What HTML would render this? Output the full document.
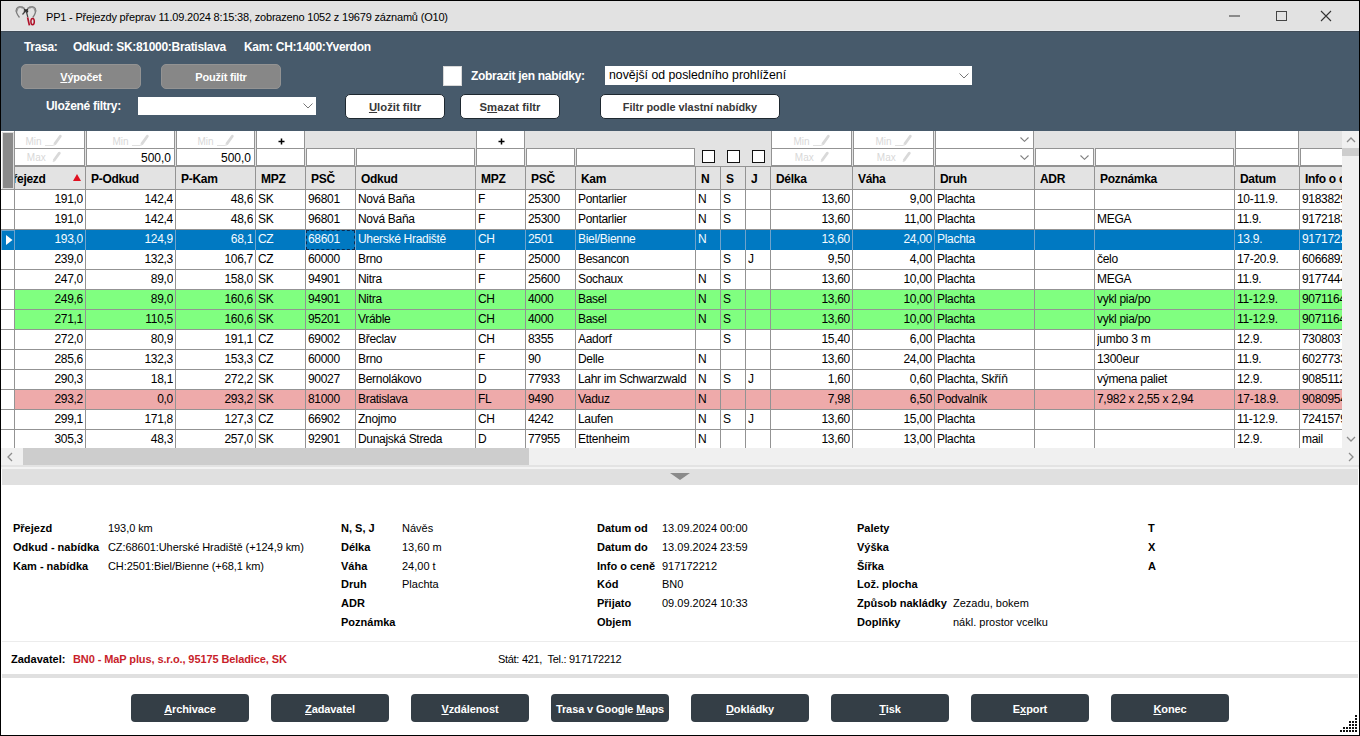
<!DOCTYPE html><html><head><meta charset="utf-8"><style>
html,body{margin:0;padding:0;background:#fff;}
#root{position:relative;width:1360px;height:736px;overflow:hidden;background:#fff;font-family:"Liberation Sans", sans-serif;}
#root div{position:absolute;box-sizing:border-box;}
.t{white-space:nowrap;line-height:1;}
.c{position:absolute;white-space:nowrap;overflow:hidden;font-size:12px;line-height:19px;color:#000;letter-spacing:-0.3px;}
.r{text-align:right;}
.btn{border-radius:4px;text-align:center;font-weight:bold;white-space:nowrap;}
u{text-decoration:underline;text-underline-offset:1px;}

</style></head><body><div id="root">
<div style="left:1px;top:1px;width:1358px;height:30px;background:#e2e2e2;"></div>
<div class="t" style="left:46px;top:12px;font-size:11px;color:#000;letter-spacing:-0.19px;">PP1 - Přejezdy přeprav 11.09.2024 8:15:38, zobrazeno 1052 z 19679 záznamů (O10)</div>
<svg style="position:absolute;left:10px;top:2px" width="30" height="28" viewBox="0 0 30 28">
<path d="M9.5 15.5 C7 12.5 5.8 9 6.6 6.8 C7.6 4.6 11 4.2 13.2 5.8 L16 8.6" fill="none" stroke="#7c7c7c" stroke-width="1.3"/>
<path d="M6.8 9.5 C6.5 7 8 5 10.5 5 C12 5 13 5.6 14 6.5" fill="none" stroke="#8a8a8a" stroke-width="2.2" stroke-dasharray="1.2 0.6"/>
<path d="M22.8 15.5 C25 12.5 26 9 25.4 6.8 C24.4 4.6 21 4.2 18.8 5.8 L16 8.6" fill="none" stroke="#7c7c7c" stroke-width="1.3"/>
<path d="M25.2 9.5 C25.5 7 24 5 21.5 5 C20 5 19 5.6 18 6.5" fill="none" stroke="#8a8a8a" stroke-width="2.2" stroke-dasharray="1.2 0.6"/>
<path d="M14 7.5 L18 10 M18 7.5 L14 10" stroke="#2a2a2a" stroke-width="1.5"/>
<path d="M15.5 9 L12.5 12.5 M16.2 9 L17.8 15" fill="none" stroke="#444" stroke-width="1.2"/>
<path d="M17.6 15.4 L19.4 23.4" stroke="#b01028" stroke-width="1.7"/>
<ellipse cx="22.6" cy="19.6" rx="1.7" ry="3.2" fill="none" stroke="#b01028" stroke-width="1.5"/>
</svg>
<div style="left:1229px;top:15px;width:11px;height:2px;background:#8a8a8a;"></div>
<div style="left:1276px;top:11px;width:11px;height:10px;border:1px solid #444;"></div>
<svg style="position:absolute;left:1320px;top:10px" width="12" height="12" viewBox="0 0 12 12"><path d="M1 1 L11 11 M11 1 L1 11" stroke="#333" stroke-width="1.1"/></svg>
<div style="left:1px;top:31px;width:1358px;height:100px;background:#475a6b;"></div>
<div style="left:1px;top:30px;width:1358px;height:1px;background:#e6e9ec;"></div>
<div style="left:1px;top:31px;width:1358px;height:1px;background:#414d59;"></div>
<div class="t" style="left:24px;top:41px;font-size:12px;font-weight:bold;color:#fff;letter-spacing:-0.3px;">Trasa:</div>
<div class="t" style="left:73px;top:41px;font-size:12px;font-weight:bold;color:#fff;letter-spacing:-0.3px;">Odkud: SK:81000:Bratislava</div>
<div class="t" style="left:244px;top:41px;font-size:12px;font-weight:bold;color:#fff;letter-spacing:-0.3px;">Kam: CH:1400:Yverdon</div>
<div style="left:21px;top:64px;width:120px;height:25px;background:#878787;border:1px solid #939393;border-radius:5px;"><div class="t" style="position:static;text-align:center;line-height:24px;font-size:11px;letter-spacing:-0.2px;font-weight:bold;color:#fff;"><u>V</u>ýpočet</div></div>
<div style="left:161px;top:64px;width:120px;height:25px;background:#878787;border:1px solid #939393;border-radius:5px;"><div class="t" style="position:static;text-align:center;line-height:24px;font-size:11px;letter-spacing:-0.2px;font-weight:bold;color:#fff;">Použít filtr</div></div>
<div style="left:443px;top:66px;width:19px;height:20px;background:#fff;border:1px solid #d8d8d8;"></div>
<div class="t" style="left:471px;top:70px;font-size:12px;font-weight:bold;color:#fff;letter-spacing:-0.3px;">Zobrazit jen nabídky:</div>
<div style="left:605px;top:66px;width:367px;height:19px;background:#fff;"><div class="t" style="left:4px;top:3px;font-size:12.3px;color:#000;">novější od posledního prohlížení</div></div>
<svg style="position:absolute;left:959px;top:73px" width="10" height="6" viewBox="0 0 10 6"><path d="M0.5 0.5 L5 5 L9.5 0.5" fill="none" stroke="#777" stroke-width="1"/></svg>
<div class="t" style="left:46px;top:100px;font-size:12px;font-weight:bold;color:#fff;letter-spacing:-0.3px;">Uložené filtry:</div>
<div style="left:138px;top:97px;width:178px;height:18px;background:#fff;"></div>
<svg style="position:absolute;left:303px;top:103px" width="10" height="6" viewBox="0 0 10 6"><path d="M0.5 0.5 L5 5 L9.5 0.5" fill="none" stroke="#777" stroke-width="1"/></svg>
<div style="left:345px;top:94px;width:100px;height:25px;background:#fff;border:1px solid #1e2830;border-radius:5px;"><div class="t" style="position:static;text-align:center;line-height:24px;font-size:11.3px;font-weight:bold;color:#383838;"><u>U</u>ložit filtr</div></div>
<div style="left:460px;top:94px;width:100px;height:25px;background:#fff;border:1px solid #1e2830;border-radius:5px;"><div class="t" style="position:static;text-align:center;line-height:24px;font-size:11.3px;font-weight:bold;color:#383838;">S<u>m</u>azat filtr</div></div>
<div style="left:600px;top:94px;width:180px;height:25px;background:#fff;border:1px solid #1e2830;border-radius:5px;"><div class="t" style="position:static;text-align:center;line-height:24px;font-size:10.9px;font-weight:bold;color:#383838;">Filtr podle vlastní nabídky</div></div>
<div style="left:1px;top:131px;width:1341px;height:36px;background:#e3e3e3;"></div>
<div style="left:14px;top:131px;width:71px;height:18px;background:#fff;border-right:1px solid #939393;border-left:1px solid #939393;border-bottom:1px solid #939393;"></div>
<svg style="position:absolute;left:23.5px;top:131px" width="40" height="17" viewBox="0 0 40 17"><text x="1.5" y="13.6" font-family="Liberation Sans" font-size="10" fill="#d8d8d8">Min</text><path d="M21 14.5 L29.5 14.5" stroke="#e0e0e0" stroke-width="1"/><path d="M36.3 5.2 L31 12.6" stroke="#d9d9d9" stroke-width="2.8" stroke-linecap="round"/><path d="M30.6 13.2 L29.6 14.6" stroke="#e2e2e2" stroke-width="1.4"/></svg>
<div style="left:14px;top:148px;width:71px;height:18px;background:#fff;border:1px solid #939393;"></div>
<svg style="position:absolute;left:23.5px;top:148px" width="40" height="17" viewBox="0 0 40 17"><text x="2.8" y="12.8" font-family="Liberation Sans" font-size="10" fill="#d8d8d8">Max</text><path d="M35.3 5.2 L30.3 12" stroke="#d9d9d9" stroke-width="2.8" stroke-linecap="round"/><path d="M29.9 12.6 L29 13.8" stroke="#e2e2e2" stroke-width="1.4"/></svg>
<div style="left:86px;top:131px;width:89px;height:18px;background:#fff;border-right:1px solid #939393;border-left:1px solid #939393;border-bottom:1px solid #939393;"></div>
<svg style="position:absolute;left:111.0px;top:131px" width="40" height="17" viewBox="0 0 40 17"><text x="1.5" y="13.6" font-family="Liberation Sans" font-size="10" fill="#d8d8d8">Min</text><path d="M21 14.5 L29.5 14.5" stroke="#e0e0e0" stroke-width="1"/><path d="M36.3 5.2 L31 12.6" stroke="#d9d9d9" stroke-width="2.8" stroke-linecap="round"/><path d="M30.6 13.2 L29.6 14.6" stroke="#e2e2e2" stroke-width="1.4"/></svg>
<div style="left:86px;top:148px;width:89px;height:18px;background:#fff;border:1px solid #939393;"><div class="t" style="right:3px;top:3px;font-size:12px;color:#000;">500,0</div></div>
<div style="left:176px;top:131px;width:79px;height:18px;background:#fff;border-right:1px solid #939393;border-left:1px solid #939393;border-bottom:1px solid #939393;"></div>
<svg style="position:absolute;left:196.0px;top:131px" width="40" height="17" viewBox="0 0 40 17"><text x="1.5" y="13.6" font-family="Liberation Sans" font-size="10" fill="#d8d8d8">Min</text><path d="M21 14.5 L29.5 14.5" stroke="#e0e0e0" stroke-width="1"/><path d="M36.3 5.2 L31 12.6" stroke="#d9d9d9" stroke-width="2.8" stroke-linecap="round"/><path d="M30.6 13.2 L29.6 14.6" stroke="#e2e2e2" stroke-width="1.4"/></svg>
<div style="left:176px;top:148px;width:79px;height:18px;background:#fff;border:1px solid #939393;"><div class="t" style="right:3px;top:3px;font-size:12px;color:#000;">500,0</div></div>
<div style="left:256px;top:131px;width:49px;height:18px;background:#fff;border-right:1px solid #939393;border-left:1px solid #939393;border-bottom:1px solid #939393;"><svg style="position:absolute;left:21.0px;top:7px" width="7" height="7" viewBox="0 0 7 7"><path d="M3.5 0.5 L3.5 6.5 M0.5 3.5 L6.5 3.5" stroke="#000" stroke-width="1.5"/></svg></div>
<div style="left:256px;top:148px;width:49px;height:18px;background:#fff;border:1px solid #939393;"></div>
<div style="left:306px;top:148px;width:49px;height:18px;background:#fff;border:1px solid #939393;"></div>
<div style="left:356px;top:148px;width:119px;height:18px;background:#fff;border:1px solid #939393;"></div>
<div style="left:476px;top:131px;width:49px;height:18px;background:#fff;border-right:1px solid #939393;border-left:1px solid #939393;border-bottom:1px solid #939393;"><svg style="position:absolute;left:21.0px;top:7px" width="7" height="7" viewBox="0 0 7 7"><path d="M3.5 0.5 L3.5 6.5 M0.5 3.5 L6.5 3.5" stroke="#000" stroke-width="1.5"/></svg></div>
<div style="left:476px;top:148px;width:49px;height:18px;background:#fff;border:1px solid #939393;"></div>
<div style="left:526px;top:148px;width:49px;height:18px;background:#fff;border:1px solid #939393;"></div>
<div style="left:576px;top:148px;width:119px;height:18px;background:#fff;border:1px solid #939393;"></div>
<div style="left:702px;top:150px;width:13px;height:13px;background:#fff;border:1px solid #111;"></div>
<div style="left:727px;top:150px;width:13px;height:13px;background:#fff;border:1px solid #111;"></div>
<div style="left:752px;top:150px;width:13px;height:13px;background:#fff;border:1px solid #111;"></div>
<div style="left:771px;top:131px;width:81px;height:18px;background:#fff;border-right:1px solid #939393;border-left:1px solid #939393;border-bottom:1px solid #939393;"></div>
<svg style="position:absolute;left:792.0px;top:131px" width="40" height="17" viewBox="0 0 40 17"><text x="1.5" y="13.6" font-family="Liberation Sans" font-size="10" fill="#d8d8d8">Min</text><path d="M21 14.5 L29.5 14.5" stroke="#e0e0e0" stroke-width="1"/><path d="M36.3 5.2 L31 12.6" stroke="#d9d9d9" stroke-width="2.8" stroke-linecap="round"/><path d="M30.6 13.2 L29.6 14.6" stroke="#e2e2e2" stroke-width="1.4"/></svg>
<div style="left:771px;top:148px;width:81px;height:18px;background:#fff;border:1px solid #939393;"></div>
<svg style="position:absolute;left:792.0px;top:148px" width="40" height="17" viewBox="0 0 40 17"><text x="2.8" y="12.8" font-family="Liberation Sans" font-size="10" fill="#d8d8d8">Max</text><path d="M35.3 5.2 L30.3 12" stroke="#d9d9d9" stroke-width="2.8" stroke-linecap="round"/><path d="M29.9 12.6 L29 13.8" stroke="#e2e2e2" stroke-width="1.4"/></svg>
<div style="left:853px;top:131px;width:81px;height:18px;background:#fff;border-right:1px solid #939393;border-left:1px solid #939393;border-bottom:1px solid #939393;"></div>
<svg style="position:absolute;left:874.0px;top:131px" width="40" height="17" viewBox="0 0 40 17"><text x="1.5" y="13.6" font-family="Liberation Sans" font-size="10" fill="#d8d8d8">Min</text><path d="M21 14.5 L29.5 14.5" stroke="#e0e0e0" stroke-width="1"/><path d="M36.3 5.2 L31 12.6" stroke="#d9d9d9" stroke-width="2.8" stroke-linecap="round"/><path d="M30.6 13.2 L29.6 14.6" stroke="#e2e2e2" stroke-width="1.4"/></svg>
<div style="left:853px;top:148px;width:81px;height:18px;background:#fff;border:1px solid #939393;"></div>
<svg style="position:absolute;left:874.0px;top:148px" width="40" height="17" viewBox="0 0 40 17"><text x="2.8" y="12.8" font-family="Liberation Sans" font-size="10" fill="#d8d8d8">Max</text><path d="M35.3 5.2 L30.3 12" stroke="#d9d9d9" stroke-width="2.8" stroke-linecap="round"/><path d="M29.9 12.6 L29 13.8" stroke="#e2e2e2" stroke-width="1.4"/></svg>
<div style="left:935px;top:131px;width:99px;height:18px;background:#fff;border-right:1px solid #939393;border-left:1px solid #939393;border-bottom:1px solid #939393;"><svg style="position:absolute;right:4px;top:6px" width="9" height="5" viewBox="0 0 9 5"><path d="M0.5 0.5 L4.5 4.3 L8.5 0.5" fill="none" stroke="#808080" stroke-width="1.1"/></svg></div>
<div style="left:935px;top:148px;width:99px;height:18px;background:#fff;border:1px solid #939393;"><svg style="position:absolute;right:4px;top:6px" width="9" height="5" viewBox="0 0 9 5"><path d="M0.5 0.5 L4.5 4.3 L8.5 0.5" fill="none" stroke="#808080" stroke-width="1.1"/></svg></div>
<div style="left:1035px;top:148px;width:59px;height:18px;background:#fff;border:1px solid #939393;"><svg style="position:absolute;right:4px;top:6px" width="9" height="5" viewBox="0 0 9 5"><path d="M0.5 0.5 L4.5 4.3 L8.5 0.5" fill="none" stroke="#808080" stroke-width="1.1"/></svg></div>
<div style="left:1095px;top:148px;width:139px;height:18px;background:#fff;border:1px solid #939393;"></div>
<div style="left:1235px;top:131px;width:64px;height:18px;background:#fff;border-right:1px solid #939393;border-left:1px solid #939393;border-bottom:1px solid #939393;"></div>
<div style="left:1235px;top:148px;width:64px;height:18px;background:#fff;border:1px solid #939393;"></div>
<div style="left:1300px;top:148px;width:101px;height:18px;background:#fff;border:1px solid #939393;"></div>
<div style="left:1px;top:166px;width:1341px;height:24px;background:#e3e3e3;border-top:1px solid #939393;border-bottom:1px solid #939393;"></div>
<div style="left:14px;top:166px;width:1px;height:24px;background:#939393;"></div>
<div class="c" style="left:15px;top:168px;width:70px;height:21px;line-height:22px;font-weight:bold;"><span style="position:absolute;left:-10px;top:0">Přejezd</span></div>
<div style="left:85px;top:166px;width:1px;height:24px;background:#939393;"></div>
<div class="c" style="left:91px;top:168px;width:84px;height:21px;line-height:22px;font-weight:bold;">P-Odkud</div>
<div style="left:175px;top:166px;width:1px;height:24px;background:#939393;"></div>
<div class="c" style="left:181px;top:168px;width:74px;height:21px;line-height:22px;font-weight:bold;">P-Kam</div>
<div style="left:255px;top:166px;width:1px;height:24px;background:#939393;"></div>
<div class="c" style="left:261px;top:168px;width:44px;height:21px;line-height:22px;font-weight:bold;">MPZ</div>
<div style="left:305px;top:166px;width:1px;height:24px;background:#939393;"></div>
<div class="c" style="left:311px;top:168px;width:44px;height:21px;line-height:22px;font-weight:bold;">PSČ</div>
<div style="left:355px;top:166px;width:1px;height:24px;background:#939393;"></div>
<div class="c" style="left:361px;top:168px;width:114px;height:21px;line-height:22px;font-weight:bold;">Odkud</div>
<div style="left:475px;top:166px;width:1px;height:24px;background:#939393;"></div>
<div class="c" style="left:481px;top:168px;width:44px;height:21px;line-height:22px;font-weight:bold;">MPZ</div>
<div style="left:525px;top:166px;width:1px;height:24px;background:#939393;"></div>
<div class="c" style="left:531px;top:168px;width:44px;height:21px;line-height:22px;font-weight:bold;">PSČ</div>
<div style="left:575px;top:166px;width:1px;height:24px;background:#939393;"></div>
<div class="c" style="left:581px;top:168px;width:114px;height:21px;line-height:22px;font-weight:bold;">Kam</div>
<div style="left:695px;top:166px;width:1px;height:24px;background:#939393;"></div>
<div class="c" style="left:701px;top:168px;width:19px;height:21px;line-height:22px;font-weight:bold;">N</div>
<div style="left:720px;top:166px;width:1px;height:24px;background:#939393;"></div>
<div class="c" style="left:726px;top:168px;width:19px;height:21px;line-height:22px;font-weight:bold;">S</div>
<div style="left:745px;top:166px;width:1px;height:24px;background:#939393;"></div>
<div class="c" style="left:751px;top:168px;width:19px;height:21px;line-height:22px;font-weight:bold;">J</div>
<div style="left:770px;top:166px;width:1px;height:24px;background:#939393;"></div>
<div class="c" style="left:776px;top:168px;width:76px;height:21px;line-height:22px;font-weight:bold;">Délka</div>
<div style="left:852px;top:166px;width:1px;height:24px;background:#939393;"></div>
<div class="c" style="left:858px;top:168px;width:76px;height:21px;line-height:22px;font-weight:bold;">Váha</div>
<div style="left:934px;top:166px;width:1px;height:24px;background:#939393;"></div>
<div class="c" style="left:940px;top:168px;width:94px;height:21px;line-height:22px;font-weight:bold;">Druh</div>
<div style="left:1034px;top:166px;width:1px;height:24px;background:#939393;"></div>
<div class="c" style="left:1040px;top:168px;width:54px;height:21px;line-height:22px;font-weight:bold;">ADR</div>
<div style="left:1094px;top:166px;width:1px;height:24px;background:#939393;"></div>
<div class="c" style="left:1100px;top:168px;width:134px;height:21px;line-height:22px;font-weight:bold;">Poznámka</div>
<div style="left:1234px;top:166px;width:1px;height:24px;background:#939393;"></div>
<div class="c" style="left:1240px;top:168px;width:59px;height:21px;line-height:22px;font-weight:bold;">Datum</div>
<div style="left:1299px;top:166px;width:1px;height:24px;background:#939393;"></div>
<div class="c" style="left:1305px;top:168px;width:37px;height:21px;line-height:22px;font-weight:bold;">Info o ceně</div>
<svg style="position:absolute;left:73px;top:174px" width="8" height="7" viewBox="0 0 8 7"><path d="M4 0 L8 7 L0 7 Z" fill="#e01020"/></svg>
<div style="left:1px;top:131px;width:13px;height:58px;background:#fff;"></div>
<div style="left:2px;top:132px;width:12px;height:57px;border:1px solid #dcdcdc;"></div>
<div style="left:3px;top:133px;width:10px;height:55px;background:#8a8a8a;"></div>
<div style="left:14px;top:131px;width:1px;height:59px;background:#939393;"></div>
<div style="left:1px;top:189px;width:14px;height:1px;background:#939393;"></div>
<div style="left:1px;top:190px;width:1341px;height:258px;overflow:hidden;">
<div style="left:13px;top:0px;width:1341px;height:20px;background:#fff;border-bottom:1px solid #939393;"></div>
<div style="left:0px;top:0px;width:13px;height:20px;background:#fff;border-bottom:1px solid #939393;"></div>
<div style="left:13px;top:0px;width:1px;height:20px;background:#939393;"></div>
<div class="c r" style="left:14px;top:0px;width:68px;color:#000;">191,0</div>
<div style="left:84px;top:0px;width:1px;height:20px;background:#939393;"></div>
<div class="c r" style="left:85px;top:0px;width:87px;color:#000;">142,4</div>
<div style="left:174px;top:0px;width:1px;height:20px;background:#939393;"></div>
<div class="c r" style="left:175px;top:0px;width:77px;color:#000;">48,6</div>
<div style="left:254px;top:0px;width:1px;height:20px;background:#939393;"></div>
<div class="c" style="left:257px;top:0px;width:47px;color:#000;">SK</div>
<div style="left:304px;top:0px;width:1px;height:20px;background:#939393;"></div>
<div class="c" style="left:307px;top:0px;width:47px;color:#000;">96801</div>
<div style="left:354px;top:0px;width:1px;height:20px;background:#939393;"></div>
<div class="c" style="left:357px;top:0px;width:117px;color:#000;">Nová Baňa</div>
<div style="left:474px;top:0px;width:1px;height:20px;background:#939393;"></div>
<div class="c" style="left:477px;top:0px;width:47px;color:#000;">F</div>
<div style="left:524px;top:0px;width:1px;height:20px;background:#939393;"></div>
<div class="c" style="left:527px;top:0px;width:47px;color:#000;">25300</div>
<div style="left:574px;top:0px;width:1px;height:20px;background:#939393;"></div>
<div class="c" style="left:577px;top:0px;width:117px;color:#000;">Pontarlier</div>
<div style="left:694px;top:0px;width:1px;height:20px;background:#939393;"></div>
<div class="c" style="left:697px;top:0px;width:22px;color:#000;">N</div>
<div style="left:719px;top:0px;width:1px;height:20px;background:#939393;"></div>
<div class="c" style="left:722px;top:0px;width:22px;color:#000;">S</div>
<div style="left:744px;top:0px;width:1px;height:20px;background:#939393;"></div>
<div style="left:769px;top:0px;width:1px;height:20px;background:#939393;"></div>
<div class="c r" style="left:770px;top:0px;width:79px;color:#000;">13,60</div>
<div style="left:851px;top:0px;width:1px;height:20px;background:#939393;"></div>
<div class="c r" style="left:852px;top:0px;width:79px;color:#000;">9,00</div>
<div style="left:933px;top:0px;width:1px;height:20px;background:#939393;"></div>
<div class="c" style="left:936px;top:0px;width:97px;color:#000;">Plachta</div>
<div style="left:1033px;top:0px;width:1px;height:20px;background:#939393;"></div>
<div style="left:1093px;top:0px;width:1px;height:20px;background:#939393;"></div>
<div style="left:1233px;top:0px;width:1px;height:20px;background:#939393;"></div>
<div class="c" style="left:1236px;top:0px;width:62px;color:#000;">10-11.9.</div>
<div style="left:1298px;top:0px;width:1px;height:20px;background:#939393;"></div>
<div class="c" style="left:1301px;top:0px;width:58px;color:#000;">9183829</div>
<div style="left:13px;top:20px;width:1341px;height:20px;background:#fff;border-bottom:1px solid #939393;"></div>
<div style="left:0px;top:20px;width:13px;height:20px;background:#fff;border-bottom:1px solid #939393;"></div>
<div style="left:13px;top:20px;width:1px;height:20px;background:#939393;"></div>
<div class="c r" style="left:14px;top:20px;width:68px;color:#000;">191,0</div>
<div style="left:84px;top:20px;width:1px;height:20px;background:#939393;"></div>
<div class="c r" style="left:85px;top:20px;width:87px;color:#000;">142,4</div>
<div style="left:174px;top:20px;width:1px;height:20px;background:#939393;"></div>
<div class="c r" style="left:175px;top:20px;width:77px;color:#000;">48,6</div>
<div style="left:254px;top:20px;width:1px;height:20px;background:#939393;"></div>
<div class="c" style="left:257px;top:20px;width:47px;color:#000;">SK</div>
<div style="left:304px;top:20px;width:1px;height:20px;background:#939393;"></div>
<div class="c" style="left:307px;top:20px;width:47px;color:#000;">96801</div>
<div style="left:354px;top:20px;width:1px;height:20px;background:#939393;"></div>
<div class="c" style="left:357px;top:20px;width:117px;color:#000;">Nová Baňa</div>
<div style="left:474px;top:20px;width:1px;height:20px;background:#939393;"></div>
<div class="c" style="left:477px;top:20px;width:47px;color:#000;">F</div>
<div style="left:524px;top:20px;width:1px;height:20px;background:#939393;"></div>
<div class="c" style="left:527px;top:20px;width:47px;color:#000;">25300</div>
<div style="left:574px;top:20px;width:1px;height:20px;background:#939393;"></div>
<div class="c" style="left:577px;top:20px;width:117px;color:#000;">Pontarlier</div>
<div style="left:694px;top:20px;width:1px;height:20px;background:#939393;"></div>
<div class="c" style="left:697px;top:20px;width:22px;color:#000;">N</div>
<div style="left:719px;top:20px;width:1px;height:20px;background:#939393;"></div>
<div class="c" style="left:722px;top:20px;width:22px;color:#000;">S</div>
<div style="left:744px;top:20px;width:1px;height:20px;background:#939393;"></div>
<div style="left:769px;top:20px;width:1px;height:20px;background:#939393;"></div>
<div class="c r" style="left:770px;top:20px;width:79px;color:#000;">13,60</div>
<div style="left:851px;top:20px;width:1px;height:20px;background:#939393;"></div>
<div class="c r" style="left:852px;top:20px;width:79px;color:#000;">11,00</div>
<div style="left:933px;top:20px;width:1px;height:20px;background:#939393;"></div>
<div class="c" style="left:936px;top:20px;width:97px;color:#000;">Plachta</div>
<div style="left:1033px;top:20px;width:1px;height:20px;background:#939393;"></div>
<div style="left:1093px;top:20px;width:1px;height:20px;background:#939393;"></div>
<div class="c" style="left:1096px;top:20px;width:137px;color:#000;">MEGA</div>
<div style="left:1233px;top:20px;width:1px;height:20px;background:#939393;"></div>
<div class="c" style="left:1236px;top:20px;width:62px;color:#000;">11.9.</div>
<div style="left:1298px;top:20px;width:1px;height:20px;background:#939393;"></div>
<div class="c" style="left:1301px;top:20px;width:58px;color:#000;">9172183</div>
<div style="left:13px;top:40px;width:1341px;height:20px;background:#0079c2;border-bottom:1px solid #0079c2;"></div>
<div style="left:0px;top:40px;width:13px;height:20px;background:#0079c2;border-top:1px solid #6fa3cc;border-left:1px solid #6fa3cc;"></div>
<div style="left:13px;top:40px;width:1px;height:20px;background:#6fa3cc;"></div>
<div class="c r" style="left:14px;top:40px;width:68px;color:#f4fbff;">193,0</div>
<div style="left:84px;top:40px;width:1px;height:20px;background:#6fa3cc;"></div>
<div class="c r" style="left:85px;top:40px;width:87px;color:#f4fbff;">124,9</div>
<div style="left:174px;top:40px;width:1px;height:20px;background:#6fa3cc;"></div>
<div class="c r" style="left:175px;top:40px;width:77px;color:#f4fbff;">68,1</div>
<div style="left:254px;top:40px;width:1px;height:20px;background:#6fa3cc;"></div>
<div class="c" style="left:257px;top:40px;width:47px;color:#f4fbff;">CZ</div>
<div style="left:304px;top:40px;width:1px;height:20px;background:#6fa3cc;"></div>
<div class="c" style="left:307px;top:40px;width:47px;color:#f4fbff;">68601</div>
<div style="left:354px;top:40px;width:1px;height:20px;background:#6fa3cc;"></div>
<div class="c" style="left:357px;top:40px;width:117px;color:#f4fbff;">Uherské Hradiště</div>
<div style="left:474px;top:40px;width:1px;height:20px;background:#6fa3cc;"></div>
<div class="c" style="left:477px;top:40px;width:47px;color:#f4fbff;">CH</div>
<div style="left:524px;top:40px;width:1px;height:20px;background:#6fa3cc;"></div>
<div class="c" style="left:527px;top:40px;width:47px;color:#f4fbff;">2501</div>
<div style="left:574px;top:40px;width:1px;height:20px;background:#6fa3cc;"></div>
<div class="c" style="left:577px;top:40px;width:117px;color:#f4fbff;">Biel/Bienne</div>
<div style="left:694px;top:40px;width:1px;height:20px;background:#6fa3cc;"></div>
<div class="c" style="left:697px;top:40px;width:22px;color:#f4fbff;">N</div>
<div style="left:719px;top:40px;width:1px;height:20px;background:#6fa3cc;"></div>
<div style="left:744px;top:40px;width:1px;height:20px;background:#6fa3cc;"></div>
<div style="left:769px;top:40px;width:1px;height:20px;background:#6fa3cc;"></div>
<div class="c r" style="left:770px;top:40px;width:79px;color:#f4fbff;">13,60</div>
<div style="left:851px;top:40px;width:1px;height:20px;background:#6fa3cc;"></div>
<div class="c r" style="left:852px;top:40px;width:79px;color:#f4fbff;">24,00</div>
<div style="left:933px;top:40px;width:1px;height:20px;background:#6fa3cc;"></div>
<div class="c" style="left:936px;top:40px;width:97px;color:#f4fbff;">Plachta</div>
<div style="left:1033px;top:40px;width:1px;height:20px;background:#6fa3cc;"></div>
<div style="left:1093px;top:40px;width:1px;height:20px;background:#6fa3cc;"></div>
<div style="left:1233px;top:40px;width:1px;height:20px;background:#6fa3cc;"></div>
<div class="c" style="left:1236px;top:40px;width:62px;color:#f4fbff;">13.9.</div>
<div style="left:1298px;top:40px;width:1px;height:20px;background:#6fa3cc;"></div>
<div class="c" style="left:1301px;top:40px;width:58px;color:#f4fbff;">9171722</div>
<svg style="position:absolute;left:5px;top:45px" width="7" height="10" viewBox="0 0 7 10"><path d="M0 0 L6.5 5 L0 10 Z" fill="#fff"/></svg>
<div style="left:305px;top:40px;width:49px;height:20px;border:1px dashed #0a2a50;"></div>
<div style="left:13px;top:60px;width:1341px;height:20px;background:#fff;border-bottom:1px solid #939393;"></div>
<div style="left:0px;top:60px;width:13px;height:20px;background:#fff;border-bottom:1px solid #939393;"></div>
<div style="left:13px;top:60px;width:1px;height:20px;background:#939393;"></div>
<div class="c r" style="left:14px;top:60px;width:68px;color:#000;">239,0</div>
<div style="left:84px;top:60px;width:1px;height:20px;background:#939393;"></div>
<div class="c r" style="left:85px;top:60px;width:87px;color:#000;">132,3</div>
<div style="left:174px;top:60px;width:1px;height:20px;background:#939393;"></div>
<div class="c r" style="left:175px;top:60px;width:77px;color:#000;">106,7</div>
<div style="left:254px;top:60px;width:1px;height:20px;background:#939393;"></div>
<div class="c" style="left:257px;top:60px;width:47px;color:#000;">CZ</div>
<div style="left:304px;top:60px;width:1px;height:20px;background:#939393;"></div>
<div class="c" style="left:307px;top:60px;width:47px;color:#000;">60000</div>
<div style="left:354px;top:60px;width:1px;height:20px;background:#939393;"></div>
<div class="c" style="left:357px;top:60px;width:117px;color:#000;">Brno</div>
<div style="left:474px;top:60px;width:1px;height:20px;background:#939393;"></div>
<div class="c" style="left:477px;top:60px;width:47px;color:#000;">F</div>
<div style="left:524px;top:60px;width:1px;height:20px;background:#939393;"></div>
<div class="c" style="left:527px;top:60px;width:47px;color:#000;">25000</div>
<div style="left:574px;top:60px;width:1px;height:20px;background:#939393;"></div>
<div class="c" style="left:577px;top:60px;width:117px;color:#000;">Besancon</div>
<div style="left:694px;top:60px;width:1px;height:20px;background:#939393;"></div>
<div style="left:719px;top:60px;width:1px;height:20px;background:#939393;"></div>
<div class="c" style="left:722px;top:60px;width:22px;color:#000;">S</div>
<div style="left:744px;top:60px;width:1px;height:20px;background:#939393;"></div>
<div class="c" style="left:747px;top:60px;width:22px;color:#000;">J</div>
<div style="left:769px;top:60px;width:1px;height:20px;background:#939393;"></div>
<div class="c r" style="left:770px;top:60px;width:79px;color:#000;">9,50</div>
<div style="left:851px;top:60px;width:1px;height:20px;background:#939393;"></div>
<div class="c r" style="left:852px;top:60px;width:79px;color:#000;">4,00</div>
<div style="left:933px;top:60px;width:1px;height:20px;background:#939393;"></div>
<div class="c" style="left:936px;top:60px;width:97px;color:#000;">Plachta</div>
<div style="left:1033px;top:60px;width:1px;height:20px;background:#939393;"></div>
<div style="left:1093px;top:60px;width:1px;height:20px;background:#939393;"></div>
<div class="c" style="left:1096px;top:60px;width:137px;color:#000;">čelo</div>
<div style="left:1233px;top:60px;width:1px;height:20px;background:#939393;"></div>
<div class="c" style="left:1236px;top:60px;width:62px;color:#000;">17-20.9.</div>
<div style="left:1298px;top:60px;width:1px;height:20px;background:#939393;"></div>
<div class="c" style="left:1301px;top:60px;width:58px;color:#000;">6066892</div>
<div style="left:13px;top:80px;width:1341px;height:20px;background:#fff;border-bottom:1px solid #939393;"></div>
<div style="left:0px;top:80px;width:13px;height:20px;background:#fff;border-bottom:1px solid #939393;"></div>
<div style="left:13px;top:80px;width:1px;height:20px;background:#939393;"></div>
<div class="c r" style="left:14px;top:80px;width:68px;color:#000;">247,0</div>
<div style="left:84px;top:80px;width:1px;height:20px;background:#939393;"></div>
<div class="c r" style="left:85px;top:80px;width:87px;color:#000;">89,0</div>
<div style="left:174px;top:80px;width:1px;height:20px;background:#939393;"></div>
<div class="c r" style="left:175px;top:80px;width:77px;color:#000;">158,0</div>
<div style="left:254px;top:80px;width:1px;height:20px;background:#939393;"></div>
<div class="c" style="left:257px;top:80px;width:47px;color:#000;">SK</div>
<div style="left:304px;top:80px;width:1px;height:20px;background:#939393;"></div>
<div class="c" style="left:307px;top:80px;width:47px;color:#000;">94901</div>
<div style="left:354px;top:80px;width:1px;height:20px;background:#939393;"></div>
<div class="c" style="left:357px;top:80px;width:117px;color:#000;">Nitra</div>
<div style="left:474px;top:80px;width:1px;height:20px;background:#939393;"></div>
<div class="c" style="left:477px;top:80px;width:47px;color:#000;">F</div>
<div style="left:524px;top:80px;width:1px;height:20px;background:#939393;"></div>
<div class="c" style="left:527px;top:80px;width:47px;color:#000;">25600</div>
<div style="left:574px;top:80px;width:1px;height:20px;background:#939393;"></div>
<div class="c" style="left:577px;top:80px;width:117px;color:#000;">Sochaux</div>
<div style="left:694px;top:80px;width:1px;height:20px;background:#939393;"></div>
<div class="c" style="left:697px;top:80px;width:22px;color:#000;">N</div>
<div style="left:719px;top:80px;width:1px;height:20px;background:#939393;"></div>
<div class="c" style="left:722px;top:80px;width:22px;color:#000;">S</div>
<div style="left:744px;top:80px;width:1px;height:20px;background:#939393;"></div>
<div style="left:769px;top:80px;width:1px;height:20px;background:#939393;"></div>
<div class="c r" style="left:770px;top:80px;width:79px;color:#000;">13,60</div>
<div style="left:851px;top:80px;width:1px;height:20px;background:#939393;"></div>
<div class="c r" style="left:852px;top:80px;width:79px;color:#000;">10,00</div>
<div style="left:933px;top:80px;width:1px;height:20px;background:#939393;"></div>
<div class="c" style="left:936px;top:80px;width:97px;color:#000;">Plachta</div>
<div style="left:1033px;top:80px;width:1px;height:20px;background:#939393;"></div>
<div style="left:1093px;top:80px;width:1px;height:20px;background:#939393;"></div>
<div class="c" style="left:1096px;top:80px;width:137px;color:#000;">MEGA</div>
<div style="left:1233px;top:80px;width:1px;height:20px;background:#939393;"></div>
<div class="c" style="left:1236px;top:80px;width:62px;color:#000;">11.9.</div>
<div style="left:1298px;top:80px;width:1px;height:20px;background:#939393;"></div>
<div class="c" style="left:1301px;top:80px;width:58px;color:#000;">9177444</div>
<div style="left:13px;top:100px;width:1341px;height:20px;background:#80ff80;border-bottom:1px solid #939393;"></div>
<div style="left:0px;top:100px;width:13px;height:20px;background:#fff;border-bottom:1px solid #939393;"></div>
<div style="left:13px;top:100px;width:1px;height:20px;background:#939393;"></div>
<div class="c r" style="left:14px;top:100px;width:68px;color:#000;">249,6</div>
<div style="left:84px;top:100px;width:1px;height:20px;background:#939393;"></div>
<div class="c r" style="left:85px;top:100px;width:87px;color:#000;">89,0</div>
<div style="left:174px;top:100px;width:1px;height:20px;background:#939393;"></div>
<div class="c r" style="left:175px;top:100px;width:77px;color:#000;">160,6</div>
<div style="left:254px;top:100px;width:1px;height:20px;background:#939393;"></div>
<div class="c" style="left:257px;top:100px;width:47px;color:#000;">SK</div>
<div style="left:304px;top:100px;width:1px;height:20px;background:#939393;"></div>
<div class="c" style="left:307px;top:100px;width:47px;color:#000;">94901</div>
<div style="left:354px;top:100px;width:1px;height:20px;background:#939393;"></div>
<div class="c" style="left:357px;top:100px;width:117px;color:#000;">Nitra</div>
<div style="left:474px;top:100px;width:1px;height:20px;background:#939393;"></div>
<div class="c" style="left:477px;top:100px;width:47px;color:#000;">CH</div>
<div style="left:524px;top:100px;width:1px;height:20px;background:#939393;"></div>
<div class="c" style="left:527px;top:100px;width:47px;color:#000;">4000</div>
<div style="left:574px;top:100px;width:1px;height:20px;background:#939393;"></div>
<div class="c" style="left:577px;top:100px;width:117px;color:#000;">Basel</div>
<div style="left:694px;top:100px;width:1px;height:20px;background:#939393;"></div>
<div class="c" style="left:697px;top:100px;width:22px;color:#000;">N</div>
<div style="left:719px;top:100px;width:1px;height:20px;background:#939393;"></div>
<div class="c" style="left:722px;top:100px;width:22px;color:#000;">S</div>
<div style="left:744px;top:100px;width:1px;height:20px;background:#939393;"></div>
<div style="left:769px;top:100px;width:1px;height:20px;background:#939393;"></div>
<div class="c r" style="left:770px;top:100px;width:79px;color:#000;">13,60</div>
<div style="left:851px;top:100px;width:1px;height:20px;background:#939393;"></div>
<div class="c r" style="left:852px;top:100px;width:79px;color:#000;">10,00</div>
<div style="left:933px;top:100px;width:1px;height:20px;background:#939393;"></div>
<div class="c" style="left:936px;top:100px;width:97px;color:#000;">Plachta</div>
<div style="left:1033px;top:100px;width:1px;height:20px;background:#939393;"></div>
<div style="left:1093px;top:100px;width:1px;height:20px;background:#939393;"></div>
<div class="c" style="left:1096px;top:100px;width:137px;color:#000;">vykl pia/po</div>
<div style="left:1233px;top:100px;width:1px;height:20px;background:#939393;"></div>
<div class="c" style="left:1236px;top:100px;width:62px;color:#000;">11-12.9.</div>
<div style="left:1298px;top:100px;width:1px;height:20px;background:#939393;"></div>
<div class="c" style="left:1301px;top:100px;width:58px;color:#000;">9071164</div>
<div style="left:13px;top:120px;width:1341px;height:20px;background:#80ff80;border-bottom:1px solid #939393;"></div>
<div style="left:0px;top:120px;width:13px;height:20px;background:#fff;border-bottom:1px solid #939393;"></div>
<div style="left:13px;top:120px;width:1px;height:20px;background:#939393;"></div>
<div class="c r" style="left:14px;top:120px;width:68px;color:#000;">271,1</div>
<div style="left:84px;top:120px;width:1px;height:20px;background:#939393;"></div>
<div class="c r" style="left:85px;top:120px;width:87px;color:#000;">110,5</div>
<div style="left:174px;top:120px;width:1px;height:20px;background:#939393;"></div>
<div class="c r" style="left:175px;top:120px;width:77px;color:#000;">160,6</div>
<div style="left:254px;top:120px;width:1px;height:20px;background:#939393;"></div>
<div class="c" style="left:257px;top:120px;width:47px;color:#000;">SK</div>
<div style="left:304px;top:120px;width:1px;height:20px;background:#939393;"></div>
<div class="c" style="left:307px;top:120px;width:47px;color:#000;">95201</div>
<div style="left:354px;top:120px;width:1px;height:20px;background:#939393;"></div>
<div class="c" style="left:357px;top:120px;width:117px;color:#000;">Vráble</div>
<div style="left:474px;top:120px;width:1px;height:20px;background:#939393;"></div>
<div class="c" style="left:477px;top:120px;width:47px;color:#000;">CH</div>
<div style="left:524px;top:120px;width:1px;height:20px;background:#939393;"></div>
<div class="c" style="left:527px;top:120px;width:47px;color:#000;">4000</div>
<div style="left:574px;top:120px;width:1px;height:20px;background:#939393;"></div>
<div class="c" style="left:577px;top:120px;width:117px;color:#000;">Basel</div>
<div style="left:694px;top:120px;width:1px;height:20px;background:#939393;"></div>
<div class="c" style="left:697px;top:120px;width:22px;color:#000;">N</div>
<div style="left:719px;top:120px;width:1px;height:20px;background:#939393;"></div>
<div class="c" style="left:722px;top:120px;width:22px;color:#000;">S</div>
<div style="left:744px;top:120px;width:1px;height:20px;background:#939393;"></div>
<div style="left:769px;top:120px;width:1px;height:20px;background:#939393;"></div>
<div class="c r" style="left:770px;top:120px;width:79px;color:#000;">13,60</div>
<div style="left:851px;top:120px;width:1px;height:20px;background:#939393;"></div>
<div class="c r" style="left:852px;top:120px;width:79px;color:#000;">10,00</div>
<div style="left:933px;top:120px;width:1px;height:20px;background:#939393;"></div>
<div class="c" style="left:936px;top:120px;width:97px;color:#000;">Plachta</div>
<div style="left:1033px;top:120px;width:1px;height:20px;background:#939393;"></div>
<div style="left:1093px;top:120px;width:1px;height:20px;background:#939393;"></div>
<div class="c" style="left:1096px;top:120px;width:137px;color:#000;">vykl pia/po</div>
<div style="left:1233px;top:120px;width:1px;height:20px;background:#939393;"></div>
<div class="c" style="left:1236px;top:120px;width:62px;color:#000;">11-12.9.</div>
<div style="left:1298px;top:120px;width:1px;height:20px;background:#939393;"></div>
<div class="c" style="left:1301px;top:120px;width:58px;color:#000;">9071164</div>
<div style="left:13px;top:140px;width:1341px;height:20px;background:#fff;border-bottom:1px solid #939393;"></div>
<div style="left:0px;top:140px;width:13px;height:20px;background:#fff;border-bottom:1px solid #939393;"></div>
<div style="left:13px;top:140px;width:1px;height:20px;background:#939393;"></div>
<div class="c r" style="left:14px;top:140px;width:68px;color:#000;">272,0</div>
<div style="left:84px;top:140px;width:1px;height:20px;background:#939393;"></div>
<div class="c r" style="left:85px;top:140px;width:87px;color:#000;">80,9</div>
<div style="left:174px;top:140px;width:1px;height:20px;background:#939393;"></div>
<div class="c r" style="left:175px;top:140px;width:77px;color:#000;">191,1</div>
<div style="left:254px;top:140px;width:1px;height:20px;background:#939393;"></div>
<div class="c" style="left:257px;top:140px;width:47px;color:#000;">CZ</div>
<div style="left:304px;top:140px;width:1px;height:20px;background:#939393;"></div>
<div class="c" style="left:307px;top:140px;width:47px;color:#000;">69002</div>
<div style="left:354px;top:140px;width:1px;height:20px;background:#939393;"></div>
<div class="c" style="left:357px;top:140px;width:117px;color:#000;">Břeclav</div>
<div style="left:474px;top:140px;width:1px;height:20px;background:#939393;"></div>
<div class="c" style="left:477px;top:140px;width:47px;color:#000;">CH</div>
<div style="left:524px;top:140px;width:1px;height:20px;background:#939393;"></div>
<div class="c" style="left:527px;top:140px;width:47px;color:#000;">8355</div>
<div style="left:574px;top:140px;width:1px;height:20px;background:#939393;"></div>
<div class="c" style="left:577px;top:140px;width:117px;color:#000;">Aadorf</div>
<div style="left:694px;top:140px;width:1px;height:20px;background:#939393;"></div>
<div style="left:719px;top:140px;width:1px;height:20px;background:#939393;"></div>
<div class="c" style="left:722px;top:140px;width:22px;color:#000;">S</div>
<div style="left:744px;top:140px;width:1px;height:20px;background:#939393;"></div>
<div style="left:769px;top:140px;width:1px;height:20px;background:#939393;"></div>
<div class="c r" style="left:770px;top:140px;width:79px;color:#000;">15,40</div>
<div style="left:851px;top:140px;width:1px;height:20px;background:#939393;"></div>
<div class="c r" style="left:852px;top:140px;width:79px;color:#000;">6,00</div>
<div style="left:933px;top:140px;width:1px;height:20px;background:#939393;"></div>
<div class="c" style="left:936px;top:140px;width:97px;color:#000;">Plachta</div>
<div style="left:1033px;top:140px;width:1px;height:20px;background:#939393;"></div>
<div style="left:1093px;top:140px;width:1px;height:20px;background:#939393;"></div>
<div class="c" style="left:1096px;top:140px;width:137px;color:#000;">jumbo 3 m</div>
<div style="left:1233px;top:140px;width:1px;height:20px;background:#939393;"></div>
<div class="c" style="left:1236px;top:140px;width:62px;color:#000;">12.9.</div>
<div style="left:1298px;top:140px;width:1px;height:20px;background:#939393;"></div>
<div class="c" style="left:1301px;top:140px;width:58px;color:#000;">7308037</div>
<div style="left:13px;top:160px;width:1341px;height:20px;background:#fff;border-bottom:1px solid #939393;"></div>
<div style="left:0px;top:160px;width:13px;height:20px;background:#fff;border-bottom:1px solid #939393;"></div>
<div style="left:13px;top:160px;width:1px;height:20px;background:#939393;"></div>
<div class="c r" style="left:14px;top:160px;width:68px;color:#000;">285,6</div>
<div style="left:84px;top:160px;width:1px;height:20px;background:#939393;"></div>
<div class="c r" style="left:85px;top:160px;width:87px;color:#000;">132,3</div>
<div style="left:174px;top:160px;width:1px;height:20px;background:#939393;"></div>
<div class="c r" style="left:175px;top:160px;width:77px;color:#000;">153,3</div>
<div style="left:254px;top:160px;width:1px;height:20px;background:#939393;"></div>
<div class="c" style="left:257px;top:160px;width:47px;color:#000;">CZ</div>
<div style="left:304px;top:160px;width:1px;height:20px;background:#939393;"></div>
<div class="c" style="left:307px;top:160px;width:47px;color:#000;">60000</div>
<div style="left:354px;top:160px;width:1px;height:20px;background:#939393;"></div>
<div class="c" style="left:357px;top:160px;width:117px;color:#000;">Brno</div>
<div style="left:474px;top:160px;width:1px;height:20px;background:#939393;"></div>
<div class="c" style="left:477px;top:160px;width:47px;color:#000;">F</div>
<div style="left:524px;top:160px;width:1px;height:20px;background:#939393;"></div>
<div class="c" style="left:527px;top:160px;width:47px;color:#000;">90</div>
<div style="left:574px;top:160px;width:1px;height:20px;background:#939393;"></div>
<div class="c" style="left:577px;top:160px;width:117px;color:#000;">Delle</div>
<div style="left:694px;top:160px;width:1px;height:20px;background:#939393;"></div>
<div class="c" style="left:697px;top:160px;width:22px;color:#000;">N</div>
<div style="left:719px;top:160px;width:1px;height:20px;background:#939393;"></div>
<div style="left:744px;top:160px;width:1px;height:20px;background:#939393;"></div>
<div style="left:769px;top:160px;width:1px;height:20px;background:#939393;"></div>
<div class="c r" style="left:770px;top:160px;width:79px;color:#000;">13,60</div>
<div style="left:851px;top:160px;width:1px;height:20px;background:#939393;"></div>
<div class="c r" style="left:852px;top:160px;width:79px;color:#000;">24,00</div>
<div style="left:933px;top:160px;width:1px;height:20px;background:#939393;"></div>
<div class="c" style="left:936px;top:160px;width:97px;color:#000;">Plachta</div>
<div style="left:1033px;top:160px;width:1px;height:20px;background:#939393;"></div>
<div style="left:1093px;top:160px;width:1px;height:20px;background:#939393;"></div>
<div class="c" style="left:1096px;top:160px;width:137px;color:#000;">1300eur</div>
<div style="left:1233px;top:160px;width:1px;height:20px;background:#939393;"></div>
<div class="c" style="left:1236px;top:160px;width:62px;color:#000;">11.9.</div>
<div style="left:1298px;top:160px;width:1px;height:20px;background:#939393;"></div>
<div class="c" style="left:1301px;top:160px;width:58px;color:#000;">6027733</div>
<div style="left:13px;top:180px;width:1341px;height:20px;background:#fff;border-bottom:1px solid #939393;"></div>
<div style="left:0px;top:180px;width:13px;height:20px;background:#fff;border-bottom:1px solid #939393;"></div>
<div style="left:13px;top:180px;width:1px;height:20px;background:#939393;"></div>
<div class="c r" style="left:14px;top:180px;width:68px;color:#000;">290,3</div>
<div style="left:84px;top:180px;width:1px;height:20px;background:#939393;"></div>
<div class="c r" style="left:85px;top:180px;width:87px;color:#000;">18,1</div>
<div style="left:174px;top:180px;width:1px;height:20px;background:#939393;"></div>
<div class="c r" style="left:175px;top:180px;width:77px;color:#000;">272,2</div>
<div style="left:254px;top:180px;width:1px;height:20px;background:#939393;"></div>
<div class="c" style="left:257px;top:180px;width:47px;color:#000;">SK</div>
<div style="left:304px;top:180px;width:1px;height:20px;background:#939393;"></div>
<div class="c" style="left:307px;top:180px;width:47px;color:#000;">90027</div>
<div style="left:354px;top:180px;width:1px;height:20px;background:#939393;"></div>
<div class="c" style="left:357px;top:180px;width:117px;color:#000;">Bernolákovo</div>
<div style="left:474px;top:180px;width:1px;height:20px;background:#939393;"></div>
<div class="c" style="left:477px;top:180px;width:47px;color:#000;">D</div>
<div style="left:524px;top:180px;width:1px;height:20px;background:#939393;"></div>
<div class="c" style="left:527px;top:180px;width:47px;color:#000;">77933</div>
<div style="left:574px;top:180px;width:1px;height:20px;background:#939393;"></div>
<div class="c" style="left:577px;top:180px;width:117px;color:#000;">Lahr im Schwarzwald</div>
<div style="left:694px;top:180px;width:1px;height:20px;background:#939393;"></div>
<div class="c" style="left:697px;top:180px;width:22px;color:#000;">N</div>
<div style="left:719px;top:180px;width:1px;height:20px;background:#939393;"></div>
<div class="c" style="left:722px;top:180px;width:22px;color:#000;">S</div>
<div style="left:744px;top:180px;width:1px;height:20px;background:#939393;"></div>
<div class="c" style="left:747px;top:180px;width:22px;color:#000;">J</div>
<div style="left:769px;top:180px;width:1px;height:20px;background:#939393;"></div>
<div class="c r" style="left:770px;top:180px;width:79px;color:#000;">1,60</div>
<div style="left:851px;top:180px;width:1px;height:20px;background:#939393;"></div>
<div class="c r" style="left:852px;top:180px;width:79px;color:#000;">0,60</div>
<div style="left:933px;top:180px;width:1px;height:20px;background:#939393;"></div>
<div class="c" style="left:936px;top:180px;width:97px;color:#000;">Plachta, Skříň</div>
<div style="left:1033px;top:180px;width:1px;height:20px;background:#939393;"></div>
<div style="left:1093px;top:180px;width:1px;height:20px;background:#939393;"></div>
<div class="c" style="left:1096px;top:180px;width:137px;color:#000;">výmena paliet</div>
<div style="left:1233px;top:180px;width:1px;height:20px;background:#939393;"></div>
<div class="c" style="left:1236px;top:180px;width:62px;color:#000;">12.9.</div>
<div style="left:1298px;top:180px;width:1px;height:20px;background:#939393;"></div>
<div class="c" style="left:1301px;top:180px;width:58px;color:#000;">9085112</div>
<div style="left:13px;top:200px;width:1341px;height:20px;background:#eeaaaa;border-bottom:1px solid #939393;"></div>
<div style="left:0px;top:200px;width:13px;height:20px;background:#fff;border-bottom:1px solid #939393;"></div>
<div style="left:13px;top:200px;width:1px;height:20px;background:#939393;"></div>
<div class="c r" style="left:14px;top:200px;width:68px;color:#000;">293,2</div>
<div style="left:84px;top:200px;width:1px;height:20px;background:#939393;"></div>
<div class="c r" style="left:85px;top:200px;width:87px;color:#000;">0,0</div>
<div style="left:174px;top:200px;width:1px;height:20px;background:#939393;"></div>
<div class="c r" style="left:175px;top:200px;width:77px;color:#000;">293,2</div>
<div style="left:254px;top:200px;width:1px;height:20px;background:#939393;"></div>
<div class="c" style="left:257px;top:200px;width:47px;color:#000;">SK</div>
<div style="left:304px;top:200px;width:1px;height:20px;background:#939393;"></div>
<div class="c" style="left:307px;top:200px;width:47px;color:#000;">81000</div>
<div style="left:354px;top:200px;width:1px;height:20px;background:#939393;"></div>
<div class="c" style="left:357px;top:200px;width:117px;color:#000;">Bratislava</div>
<div style="left:474px;top:200px;width:1px;height:20px;background:#939393;"></div>
<div class="c" style="left:477px;top:200px;width:47px;color:#000;">FL</div>
<div style="left:524px;top:200px;width:1px;height:20px;background:#939393;"></div>
<div class="c" style="left:527px;top:200px;width:47px;color:#000;">9490</div>
<div style="left:574px;top:200px;width:1px;height:20px;background:#939393;"></div>
<div class="c" style="left:577px;top:200px;width:117px;color:#000;">Vaduz</div>
<div style="left:694px;top:200px;width:1px;height:20px;background:#939393;"></div>
<div class="c" style="left:697px;top:200px;width:22px;color:#000;">N</div>
<div style="left:719px;top:200px;width:1px;height:20px;background:#939393;"></div>
<div style="left:744px;top:200px;width:1px;height:20px;background:#939393;"></div>
<div style="left:769px;top:200px;width:1px;height:20px;background:#939393;"></div>
<div class="c r" style="left:770px;top:200px;width:79px;color:#000;">7,98</div>
<div style="left:851px;top:200px;width:1px;height:20px;background:#939393;"></div>
<div class="c r" style="left:852px;top:200px;width:79px;color:#000;">6,50</div>
<div style="left:933px;top:200px;width:1px;height:20px;background:#939393;"></div>
<div class="c" style="left:936px;top:200px;width:97px;color:#000;">Podvalník</div>
<div style="left:1033px;top:200px;width:1px;height:20px;background:#939393;"></div>
<div style="left:1093px;top:200px;width:1px;height:20px;background:#939393;"></div>
<div class="c" style="left:1096px;top:200px;width:137px;color:#000;">7,982 x 2,55 x 2,94</div>
<div style="left:1233px;top:200px;width:1px;height:20px;background:#939393;"></div>
<div class="c" style="left:1236px;top:200px;width:62px;color:#000;">17-18.9.</div>
<div style="left:1298px;top:200px;width:1px;height:20px;background:#939393;"></div>
<div class="c" style="left:1301px;top:200px;width:58px;color:#000;">9080954</div>
<div style="left:13px;top:220px;width:1341px;height:20px;background:#fff;border-bottom:1px solid #939393;"></div>
<div style="left:0px;top:220px;width:13px;height:20px;background:#fff;border-bottom:1px solid #939393;"></div>
<div style="left:13px;top:220px;width:1px;height:20px;background:#939393;"></div>
<div class="c r" style="left:14px;top:220px;width:68px;color:#000;">299,1</div>
<div style="left:84px;top:220px;width:1px;height:20px;background:#939393;"></div>
<div class="c r" style="left:85px;top:220px;width:87px;color:#000;">171,8</div>
<div style="left:174px;top:220px;width:1px;height:20px;background:#939393;"></div>
<div class="c r" style="left:175px;top:220px;width:77px;color:#000;">127,3</div>
<div style="left:254px;top:220px;width:1px;height:20px;background:#939393;"></div>
<div class="c" style="left:257px;top:220px;width:47px;color:#000;">CZ</div>
<div style="left:304px;top:220px;width:1px;height:20px;background:#939393;"></div>
<div class="c" style="left:307px;top:220px;width:47px;color:#000;">66902</div>
<div style="left:354px;top:220px;width:1px;height:20px;background:#939393;"></div>
<div class="c" style="left:357px;top:220px;width:117px;color:#000;">Znojmo</div>
<div style="left:474px;top:220px;width:1px;height:20px;background:#939393;"></div>
<div class="c" style="left:477px;top:220px;width:47px;color:#000;">CH</div>
<div style="left:524px;top:220px;width:1px;height:20px;background:#939393;"></div>
<div class="c" style="left:527px;top:220px;width:47px;color:#000;">4242</div>
<div style="left:574px;top:220px;width:1px;height:20px;background:#939393;"></div>
<div class="c" style="left:577px;top:220px;width:117px;color:#000;">Laufen</div>
<div style="left:694px;top:220px;width:1px;height:20px;background:#939393;"></div>
<div class="c" style="left:697px;top:220px;width:22px;color:#000;">N</div>
<div style="left:719px;top:220px;width:1px;height:20px;background:#939393;"></div>
<div class="c" style="left:722px;top:220px;width:22px;color:#000;">S</div>
<div style="left:744px;top:220px;width:1px;height:20px;background:#939393;"></div>
<div class="c" style="left:747px;top:220px;width:22px;color:#000;">J</div>
<div style="left:769px;top:220px;width:1px;height:20px;background:#939393;"></div>
<div class="c r" style="left:770px;top:220px;width:79px;color:#000;">13,60</div>
<div style="left:851px;top:220px;width:1px;height:20px;background:#939393;"></div>
<div class="c r" style="left:852px;top:220px;width:79px;color:#000;">15,00</div>
<div style="left:933px;top:220px;width:1px;height:20px;background:#939393;"></div>
<div class="c" style="left:936px;top:220px;width:97px;color:#000;">Plachta</div>
<div style="left:1033px;top:220px;width:1px;height:20px;background:#939393;"></div>
<div style="left:1093px;top:220px;width:1px;height:20px;background:#939393;"></div>
<div style="left:1233px;top:220px;width:1px;height:20px;background:#939393;"></div>
<div class="c" style="left:1236px;top:220px;width:62px;color:#000;">11-12.9.</div>
<div style="left:1298px;top:220px;width:1px;height:20px;background:#939393;"></div>
<div class="c" style="left:1301px;top:220px;width:58px;color:#000;">7241579</div>
<div style="left:13px;top:240px;width:1341px;height:20px;background:#fff;border-bottom:1px solid #939393;"></div>
<div style="left:0px;top:240px;width:13px;height:20px;background:#fff;border-bottom:1px solid #939393;"></div>
<div style="left:13px;top:240px;width:1px;height:20px;background:#939393;"></div>
<div class="c r" style="left:14px;top:240px;width:68px;color:#000;">305,3</div>
<div style="left:84px;top:240px;width:1px;height:20px;background:#939393;"></div>
<div class="c r" style="left:85px;top:240px;width:87px;color:#000;">48,3</div>
<div style="left:174px;top:240px;width:1px;height:20px;background:#939393;"></div>
<div class="c r" style="left:175px;top:240px;width:77px;color:#000;">257,0</div>
<div style="left:254px;top:240px;width:1px;height:20px;background:#939393;"></div>
<div class="c" style="left:257px;top:240px;width:47px;color:#000;">SK</div>
<div style="left:304px;top:240px;width:1px;height:20px;background:#939393;"></div>
<div class="c" style="left:307px;top:240px;width:47px;color:#000;">92901</div>
<div style="left:354px;top:240px;width:1px;height:20px;background:#939393;"></div>
<div class="c" style="left:357px;top:240px;width:117px;color:#000;">Dunajská Streda</div>
<div style="left:474px;top:240px;width:1px;height:20px;background:#939393;"></div>
<div class="c" style="left:477px;top:240px;width:47px;color:#000;">D</div>
<div style="left:524px;top:240px;width:1px;height:20px;background:#939393;"></div>
<div class="c" style="left:527px;top:240px;width:47px;color:#000;">77955</div>
<div style="left:574px;top:240px;width:1px;height:20px;background:#939393;"></div>
<div class="c" style="left:577px;top:240px;width:117px;color:#000;">Ettenheim</div>
<div style="left:694px;top:240px;width:1px;height:20px;background:#939393;"></div>
<div class="c" style="left:697px;top:240px;width:22px;color:#000;">N</div>
<div style="left:719px;top:240px;width:1px;height:20px;background:#939393;"></div>
<div style="left:744px;top:240px;width:1px;height:20px;background:#939393;"></div>
<div style="left:769px;top:240px;width:1px;height:20px;background:#939393;"></div>
<div class="c r" style="left:770px;top:240px;width:79px;color:#000;">13,60</div>
<div style="left:851px;top:240px;width:1px;height:20px;background:#939393;"></div>
<div class="c r" style="left:852px;top:240px;width:79px;color:#000;">13,00</div>
<div style="left:933px;top:240px;width:1px;height:20px;background:#939393;"></div>
<div class="c" style="left:936px;top:240px;width:97px;color:#000;">Plachta</div>
<div style="left:1033px;top:240px;width:1px;height:20px;background:#939393;"></div>
<div style="left:1093px;top:240px;width:1px;height:20px;background:#939393;"></div>
<div style="left:1233px;top:240px;width:1px;height:20px;background:#939393;"></div>
<div class="c" style="left:1236px;top:240px;width:62px;color:#000;">12.9.</div>
<div style="left:1298px;top:240px;width:1px;height:20px;background:#939393;"></div>
<div class="c" style="left:1301px;top:240px;width:58px;color:#000;">mail</div>
</div>
<div style="left:1342px;top:131px;width:17px;height:317px;background:#f0f0f0;"></div>
<div style="left:1342px;top:148px;width:17px;height:8px;background:#cdcdcd;"></div>
<svg style="position:absolute;left:1346px;top:136px" width="10" height="8" viewBox="0 0 10 8"><path d="M1 6 L5 2 L9 6" fill="none" stroke="#8c8c8c" stroke-width="1.3"/></svg>
<svg style="position:absolute;left:1346px;top:435px" width="10" height="8" viewBox="0 0 10 8"><path d="M1 2 L5 6 L9 2" fill="none" stroke="#8c8c8c" stroke-width="1.3"/></svg>
<div style="left:1px;top:448px;width:1358px;height:17px;background:#f0f0f0;"></div>
<div style="left:23px;top:448px;width:506px;height:17px;background:#cdcdcd;"></div>
<svg style="position:absolute;left:6px;top:452px" width="8" height="10" viewBox="0 0 8 10"><path d="M6 1 L2 5 L6 9" fill="none" stroke="#8c8c8c" stroke-width="1.3"/></svg>
<svg style="position:absolute;left:1347px;top:452px" width="8" height="10" viewBox="0 0 8 10"><path d="M2 1 L6 5 L2 9" fill="none" stroke="#8c8c8c" stroke-width="1.3"/></svg>
<div style="left:1px;top:465px;width:1358px;height:2px;background:#e3e3e3;"></div>
<div style="left:1px;top:467px;width:1358px;height:2px;background:#f3f3f3;"></div>
<div style="left:2px;top:469px;width:1356px;height:16px;background:#e0e0e0;"></div>
<svg style="position:absolute;left:670px;top:473px" width="20" height="7" viewBox="0 0 20 7"><path d="M0 0 L20 0 L10 7 Z" fill="#8a8a8a"/></svg>
<div class="t" style="left:13px;top:523px;font-size:11px;font-weight:bold;color:#000;letter-spacing:0px;">Přejezd</div>
<div class="t" style="left:108px;top:523px;font-size:11px;font-weight:normal;color:#000;letter-spacing:-0.07px;">193,0 km</div>
<div class="t" style="left:13px;top:542px;font-size:11px;font-weight:bold;color:#000;letter-spacing:0px;">Odkud - nabídka</div>
<div class="t" style="left:108px;top:542px;font-size:11px;font-weight:normal;color:#000;letter-spacing:-0.07px;">CZ:68601:Uherské Hradiště (+124,9 km)</div>
<div class="t" style="left:13px;top:561px;font-size:11px;font-weight:bold;color:#000;letter-spacing:0px;">Kam - nabídka</div>
<div class="t" style="left:108px;top:561px;font-size:11px;font-weight:normal;color:#000;letter-spacing:-0.07px;">CH:2501:Biel/Bienne (+68,1 km)</div>
<div class="t" style="left:341px;top:523px;font-size:11px;font-weight:bold;color:#000;letter-spacing:0px;">N, S, J</div>
<div class="t" style="left:402px;top:523px;font-size:11px;font-weight:normal;color:#000;letter-spacing:0px;">Návěs</div>
<div class="t" style="left:341px;top:542px;font-size:11px;font-weight:bold;color:#000;letter-spacing:0px;">Délka</div>
<div class="t" style="left:402px;top:542px;font-size:11px;font-weight:normal;color:#000;letter-spacing:0px;">13,60 m</div>
<div class="t" style="left:341px;top:561px;font-size:11px;font-weight:bold;color:#000;letter-spacing:0px;">Váha</div>
<div class="t" style="left:402px;top:561px;font-size:11px;font-weight:normal;color:#000;letter-spacing:0px;">24,00 t</div>
<div class="t" style="left:341px;top:579px;font-size:11px;font-weight:bold;color:#000;letter-spacing:0px;">Druh</div>
<div class="t" style="left:402px;top:579px;font-size:11px;font-weight:normal;color:#000;letter-spacing:0px;">Plachta</div>
<div class="t" style="left:341px;top:598px;font-size:11px;font-weight:bold;color:#000;letter-spacing:0px;">ADR</div>
<div class="t" style="left:402px;top:598px;font-size:11px;font-weight:normal;color:#000;letter-spacing:0px;"></div>
<div class="t" style="left:341px;top:617px;font-size:11px;font-weight:bold;color:#000;letter-spacing:0px;">Poznámka</div>
<div class="t" style="left:402px;top:617px;font-size:11px;font-weight:normal;color:#000;letter-spacing:0px;"></div>
<div class="t" style="left:597px;top:523px;font-size:11px;font-weight:bold;color:#000;letter-spacing:0px;">Datum od</div>
<div class="t" style="left:662px;top:523px;font-size:11px;font-weight:normal;color:#000;letter-spacing:0px;">13.09.2024 00:00</div>
<div class="t" style="left:597px;top:542px;font-size:11px;font-weight:bold;color:#000;letter-spacing:0px;">Datum do</div>
<div class="t" style="left:662px;top:542px;font-size:11px;font-weight:normal;color:#000;letter-spacing:0px;">13.09.2024 23:59</div>
<div class="t" style="left:597px;top:561px;font-size:11px;font-weight:bold;color:#000;letter-spacing:0px;">Info o ceně</div>
<div class="t" style="left:662px;top:561px;font-size:11px;font-weight:normal;color:#000;letter-spacing:0px;">917172212</div>
<div class="t" style="left:597px;top:579px;font-size:11px;font-weight:bold;color:#000;letter-spacing:0px;">Kód</div>
<div class="t" style="left:662px;top:579px;font-size:11px;font-weight:normal;color:#000;letter-spacing:0px;">BN0</div>
<div class="t" style="left:597px;top:598px;font-size:11px;font-weight:bold;color:#000;letter-spacing:0px;">Přijato</div>
<div class="t" style="left:662px;top:598px;font-size:11px;font-weight:normal;color:#000;letter-spacing:0px;">09.09.2024 10:33</div>
<div class="t" style="left:597px;top:617px;font-size:11px;font-weight:bold;color:#000;letter-spacing:0px;">Objem</div>
<div class="t" style="left:662px;top:617px;font-size:11px;font-weight:normal;color:#000;letter-spacing:0px;"></div>
<div class="t" style="left:857px;top:523px;font-size:11px;font-weight:bold;color:#000;letter-spacing:0px;">Palety</div>
<div class="t" style="left:953px;top:523px;font-size:11px;font-weight:normal;color:#000;letter-spacing:0px;"></div>
<div class="t" style="left:857px;top:542px;font-size:11px;font-weight:bold;color:#000;letter-spacing:0px;">Výška</div>
<div class="t" style="left:953px;top:542px;font-size:11px;font-weight:normal;color:#000;letter-spacing:0px;"></div>
<div class="t" style="left:857px;top:561px;font-size:11px;font-weight:bold;color:#000;letter-spacing:0px;">Šířka</div>
<div class="t" style="left:953px;top:561px;font-size:11px;font-weight:normal;color:#000;letter-spacing:0px;"></div>
<div class="t" style="left:857px;top:579px;font-size:11px;font-weight:bold;color:#000;letter-spacing:0px;">Lož. plocha</div>
<div class="t" style="left:953px;top:579px;font-size:11px;font-weight:normal;color:#000;letter-spacing:0px;"></div>
<div class="t" style="left:857px;top:598px;font-size:11px;font-weight:bold;color:#000;letter-spacing:0px;">Způsob nakládky</div>
<div class="t" style="left:953px;top:598px;font-size:11px;font-weight:normal;color:#000;letter-spacing:0px;">Zezadu, bokem</div>
<div class="t" style="left:857px;top:617px;font-size:11px;font-weight:bold;color:#000;letter-spacing:0px;">Doplňky</div>
<div class="t" style="left:953px;top:617px;font-size:11px;font-weight:normal;color:#000;letter-spacing:0px;">nákl. prostor vcelku</div>
<div class="t" style="left:1148px;top:523px;font-size:11px;font-weight:bold;color:#000;letter-spacing:0px;">T</div>
<div class="t" style="left:1148px;top:542px;font-size:11px;font-weight:bold;color:#000;letter-spacing:0px;">X</div>
<div class="t" style="left:1148px;top:561px;font-size:11px;font-weight:bold;color:#000;letter-spacing:0px;">A</div>
<div style="left:2px;top:641px;width:1356px;height:1px;background:#ececec;"></div>
<div class="t" style="left:11px;top:654px;font-size:11px;font-weight:bold;color:#000;letter-spacing:0px;">Zadavatel:</div>
<div class="t" style="left:73px;top:654px;font-size:11px;font-weight:bold;color:#c81e2b;letter-spacing:-0.1px;">BN0 - MaP plus, s.r.o., 95175 Beladice, SK</div>
<div class="t" style="left:498px;top:654px;font-size:11px;font-weight:normal;color:#000;letter-spacing:-0.3px;">Stát: 421,&nbsp;&nbsp;Tel.: 917172212</div>
<div style="left:2px;top:674px;width:1356px;height:4px;background:#e0e0e0;"></div>
<div style="left:131px;top:694px;width:118px;height:28px;background:#343e46;border-radius:4px;"><div class="t" style="position:static;text-align:center;line-height:30px;font-size:11px;font-weight:bold;color:#fff;letter-spacing:-0.1px;"><u>A</u>rchivace</div></div>
<div style="left:271px;top:694px;width:118px;height:28px;background:#343e46;border-radius:4px;"><div class="t" style="position:static;text-align:center;line-height:30px;font-size:11px;font-weight:bold;color:#fff;letter-spacing:-0.1px;"><u>Z</u>adavatel</div></div>
<div style="left:411px;top:694px;width:118px;height:28px;background:#343e46;border-radius:4px;"><div class="t" style="position:static;text-align:center;line-height:30px;font-size:11px;font-weight:bold;color:#fff;letter-spacing:-0.1px;"><u>V</u>zdálenost</div></div>
<div style="left:551px;top:694px;width:118px;height:28px;background:#343e46;border-radius:4px;"><div class="t" style="position:static;text-align:center;line-height:30px;font-size:11px;font-weight:bold;color:#fff;letter-spacing:-0.1px;">Trasa v Google <u>M</u>aps</div></div>
<div style="left:691px;top:694px;width:118px;height:28px;background:#343e46;border-radius:4px;"><div class="t" style="position:static;text-align:center;line-height:30px;font-size:11px;font-weight:bold;color:#fff;letter-spacing:-0.1px;"><u>D</u>okládky</div></div>
<div style="left:831px;top:694px;width:118px;height:28px;background:#343e46;border-radius:4px;"><div class="t" style="position:static;text-align:center;line-height:30px;font-size:11px;font-weight:bold;color:#fff;letter-spacing:-0.1px;"><u>T</u>isk</div></div>
<div style="left:971px;top:694px;width:118px;height:28px;background:#343e46;border-radius:4px;"><div class="t" style="position:static;text-align:center;line-height:30px;font-size:11px;font-weight:bold;color:#fff;letter-spacing:-0.1px;">E<u>x</u>port</div></div>
<div style="left:1111px;top:694px;width:118px;height:28px;background:#343e46;border-radius:4px;"><div class="t" style="position:static;text-align:center;line-height:30px;font-size:11px;font-weight:bold;color:#fff;letter-spacing:-0.1px;"><u>K</u>onec</div></div>
<svg style="position:absolute;left:1340px;top:715px" width="18" height="18" viewBox="0 0 18 18"><rect x="15" y="0" width="2" height="2" fill="#111"/><rect x="15" y="3" width="2" height="2" fill="#111"/><rect x="9" y="6" width="2" height="2" fill="#111"/><rect x="12" y="6" width="2" height="2" fill="#111"/><rect x="15" y="6" width="2" height="2" fill="#111"/><rect x="9" y="9" width="2" height="2" fill="#111"/><rect x="12" y="9" width="2" height="2" fill="#111"/><rect x="15" y="9" width="2" height="2" fill="#111"/><rect x="3" y="12" width="2" height="2" fill="#111"/><rect x="6" y="12" width="2" height="2" fill="#111"/><rect x="9" y="12" width="2" height="2" fill="#111"/><rect x="12" y="12" width="2" height="2" fill="#111"/><rect x="15" y="12" width="2" height="2" fill="#111"/><rect x="0" y="15" width="2" height="2" fill="#111"/><rect x="3" y="15" width="2" height="2" fill="#111"/><rect x="6" y="15" width="2" height="2" fill="#111"/><rect x="9" y="15" width="2" height="2" fill="#111"/><rect x="12" y="15" width="2" height="2" fill="#111"/><rect x="15" y="15" width="2" height="2" fill="#111"/></svg>
<div style="left:0px;top:0px;width:1360px;height:1px;background:#000;"></div>
<div style="left:0px;top:0px;width:1px;height:736px;background:#000;"></div>
<div style="left:1359px;top:0px;width:1px;height:736px;background:#000;"></div>
<div style="left:0px;top:735px;width:1360px;height:1px;background:#000;"></div>
</div></body></html>
